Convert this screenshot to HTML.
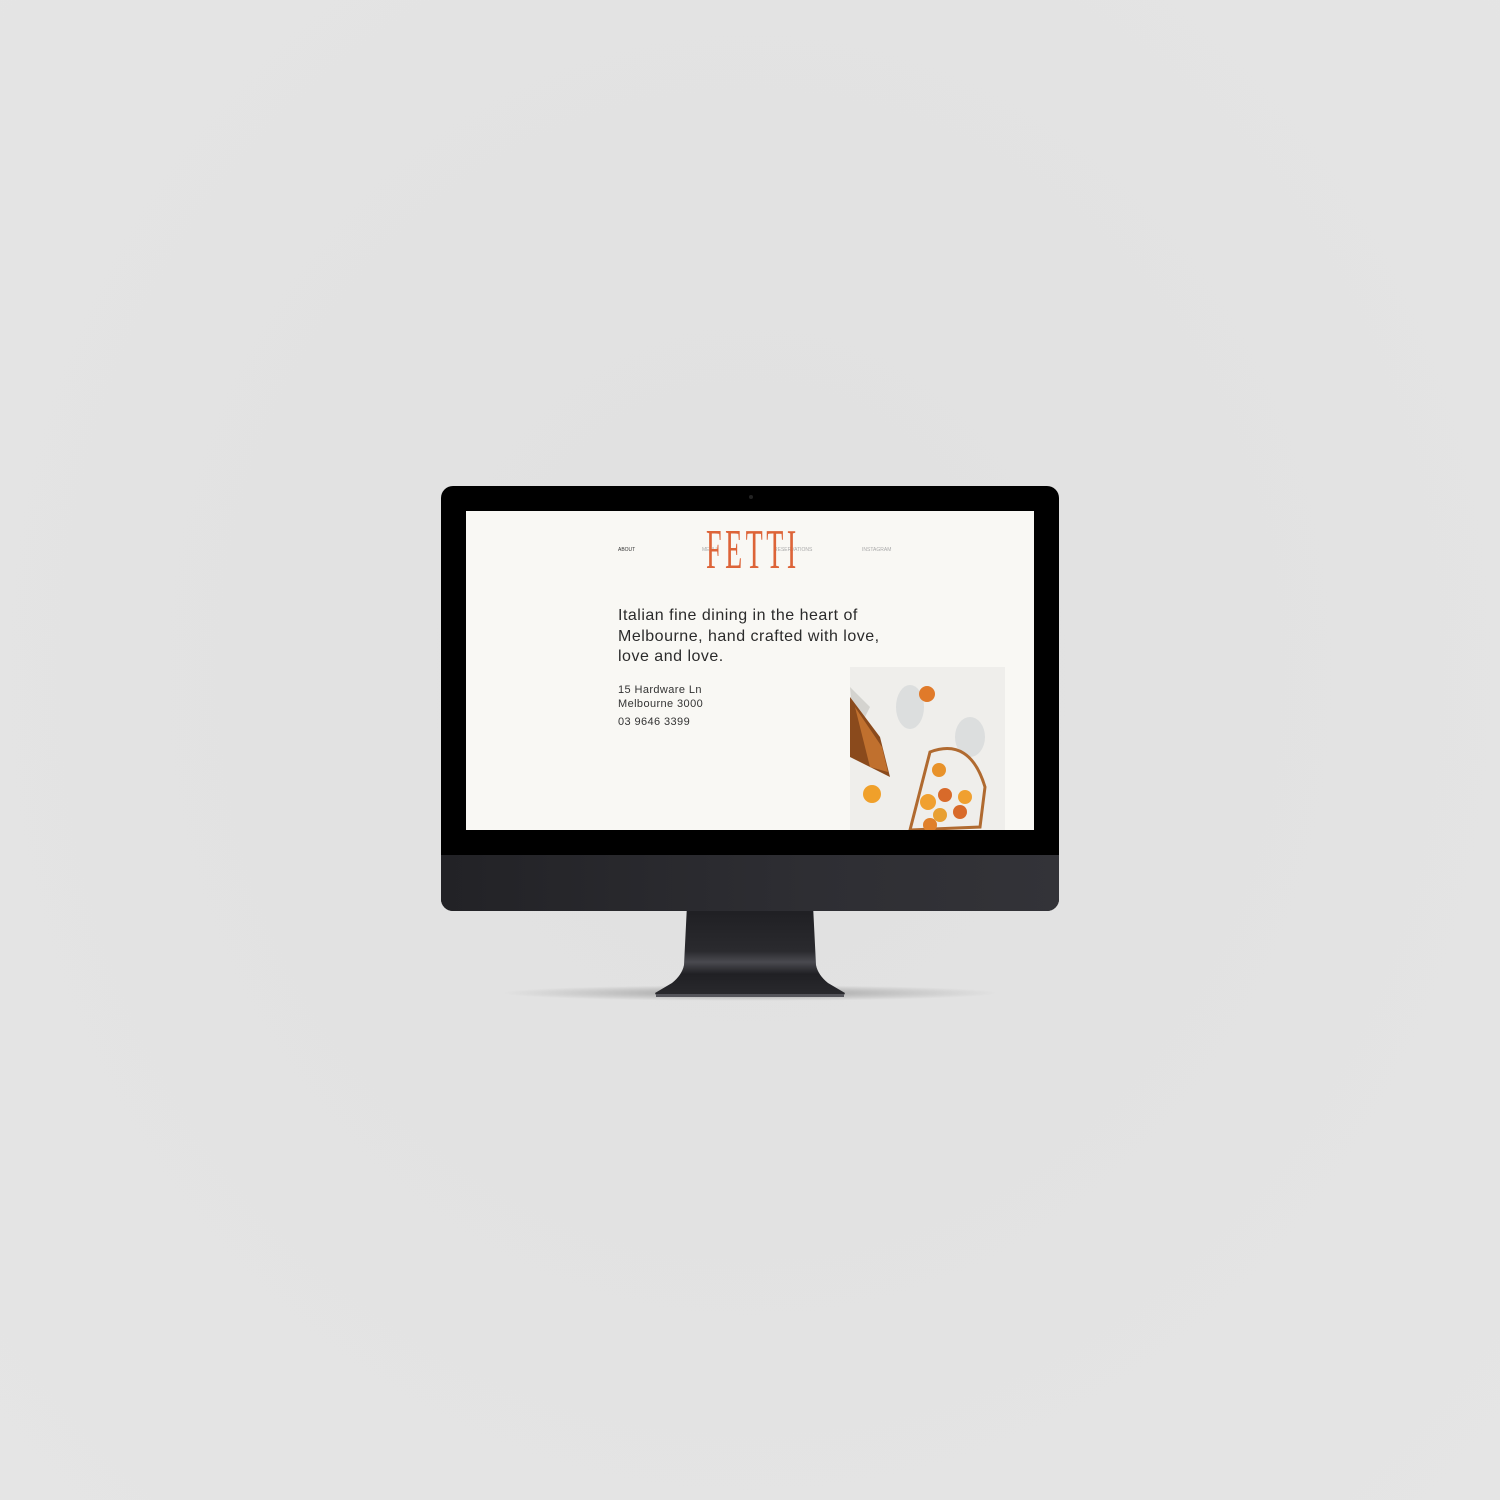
<!DOCTYPE html>
<html><head><style>
html,body{margin:0;padding:0;width:1500px;height:1500px;background:#e2e2e2;overflow:hidden;font-family:"Liberation Sans",sans-serif}
.abs{position:absolute}
</style></head><body>
<div class="abs" style="left:0;top:0;width:1500px;height:1500px;background:radial-gradient(ellipse at 50% 45%,#e0e0e0,#e3e3e3 60%,#e5e5e5)"></div>
<div class="abs" style="left:500px;top:985px;width:500px;height:16px;border-radius:50%;background:radial-gradient(ellipse,rgba(0,0,0,0.3),rgba(0,0,0,0) 70%)"></div>
<svg class="abs" style="left:650px;top:905px" width="200" height="96">
<defs><linearGradient id="g" x1="0" y1="0" x2="0" y2="1"><stop offset="0" stop-color="#1e1e22"/><stop offset="0.5" stop-color="#2a2a2e"/><stop offset="0.62" stop-color="#4a4a50"/><stop offset="0.75" stop-color="#202024"/><stop offset="1" stop-color="#2a2a2e"/></linearGradient></defs>
<path d="M37 0 L163 0 L166 60 Q168 70 178 78 L195 88 L193 92 L7 92 L5 88 L22 78 Q32 70 34 60 Z" fill="url(#g)"/>
<rect x="6" y="89" width="188" height="3" fill="#55555b"/>
</svg>
<div class="abs" style="left:441px;top:486px;width:618px;height:425px;border-radius:12px;background:#000;overflow:hidden">
  <div class="abs" style="left:0;top:369px;width:618px;height:56px;background:linear-gradient(90deg,#222226,#2e2e33 60%,#333338)"></div>
  <div class="abs" style="left:308px;top:9px;width:4px;height:4px;border-radius:50%;background:#222"></div>
  <div class="abs" style="left:25px;top:25px;width:568px;height:319px;background:#f9f8f4;overflow:hidden">
    <div class="abs" style="left:152px;top:36px;font-size:5px;color:#333">ABOUT</div>
    <div class="abs" style="left:236px;top:36px;font-size:5px;color:#aaa">MENU</div>
    <div class="abs" style="left:308px;top:36px;font-size:5px;color:#aaa">RESERVATIONS</div>
    <div class="abs" style="left:396px;top:36px;font-size:5px;color:#aaa">INSTAGRAM</div>
    <div class="abs" style="left:240px;top:11px;font-family:'Liberation Serif',serif;font-size:56px;line-height:56px;color:#dd6438;transform:scaleX(0.5);transform-origin:0 0;letter-spacing:7px">FETTI</div>
    <div class="abs" style="left:152px;top:95px;font-size:16px;line-height:20.5px;color:#2b2b2b;letter-spacing:0.5px">Italian fine dining in the heart of<br>Melbourne, hand crafted with love,<br>love and love.</div>
    <div class="abs" style="left:152px;top:172px;font-size:11px;line-height:14px;color:#333;letter-spacing:0.4px">15 Hardware Ln<br>Melbourne 3000</div>
    <div class="abs" style="left:152px;top:205px;font-size:11px;color:#333;letter-spacing:0.4px">03 9646 3399</div>
    <svg class="abs" style="left:384px;top:156px" width="155" height="163">
      <rect width="155" height="163" fill="#efeeeb"/>
      <path d="M0 20 L20 40 L5 70 Z" fill="#d4d3cf"/>
      <path d="M0 30 L30 70 L40 110 L0 90 Z" fill="#8a4a1c"/>
      <path d="M5 40 L32 80 L38 105 L20 100 Z" fill="#c0702e"/>
      <ellipse cx="60" cy="40" rx="14" ry="22" fill="#dcdede"/>
      <ellipse cx="120" cy="70" rx="15" ry="20" fill="#dcdede"/>
      <circle cx="77" cy="27" r="8" fill="#e07a2a"/>
      <circle cx="89" cy="103" r="7" fill="#e8922a"/>
      <circle cx="22" cy="127" r="9" fill="#f0a02a"/>
      <path d="M80 85 Q120 70 135 120 L130 160 L60 163 Z" fill="none" stroke="#b06a30" stroke-width="3"/>
      <circle cx="78" cy="135" r="8" fill="#f0a030"/>
      <circle cx="95" cy="128" r="7" fill="#d86a2a"/>
      <circle cx="90" cy="148" r="7" fill="#e8a032"/>
      <circle cx="110" cy="145" r="7" fill="#d86a2a"/>
      <circle cx="115" cy="130" r="7" fill="#f0a030"/>
      <circle cx="80" cy="158" r="7" fill="#e0802a"/>
    </svg>
  </div>
</div>
</body></html>
